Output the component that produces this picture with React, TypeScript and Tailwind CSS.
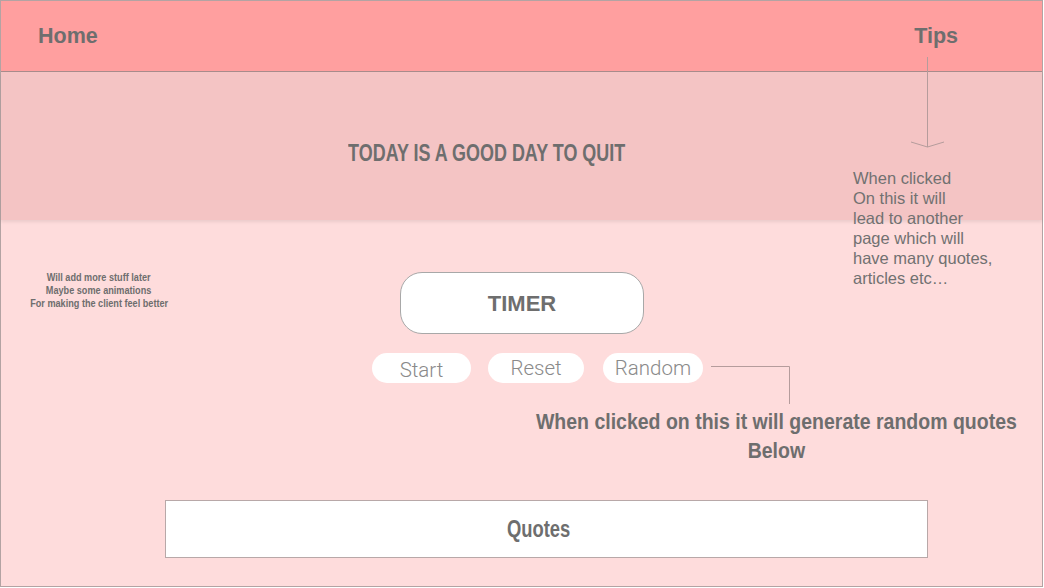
import React from "react";

// no condensed face is installed, so the bold headings are squeezed horizontally
const Squeeze = ({
	children,
	className = "",
}: {
	children: React.ReactNode;
	className?: string;
}) => (
	<span className={"inline-block whitespace-nowrap " + className}>{children}</span>
);

const Pill = ({
	label,
	width,
	offset = "",
}: {
	label: string;
	width: string;
	offset?: string;
}) => (
	<button
		className={
			"h-[30px] rounded-full bg-white text-[20.5px] font-light leading-none text-[#8a8a8a] font-['Roboto',sans-serif] " +
			width +
			" " +
			offset
		}>
		{label}
	</button>
);

const App: React.FC = () => {
	return (
		<div className="relative flex h-[588px] w-[1044px] flex-col overflow-hidden font-['Liberation_Sans',sans-serif] text-[#6e6e6e]">
			<div className="flex h-[587px] w-[1043px] flex-col border border-[#b3a3a3] bg-[#fedcdc]">
				{/* top bar */}
				<header className="flex h-[71px] shrink-0 items-center justify-between border-b border-[#a98c8c] bg-[#ff9f9f] pl-[37px] pr-[84px]">
					<span className="text-[21.5px] font-bold">Home</span>
					<span className="text-[21.5px] font-bold">Tips</span>
				</header>

				{/* banner */}
				<section className="flex h-[148px] shrink-0 items-center justify-center bg-[#f4c4c4] pr-[70px] shadow-[0_2px_3px_rgba(0,0,0,0.08)]">
					<h1 className="pt-[14px] text-[23px] font-bold">
						<Squeeze className="scale-x-[0.78]">TODAY IS A GOOD DAY TO QUIT</Squeeze>
					</h1>
				</section>

				{/* body */}
				<main className="relative flex flex-1 flex-col items-center">
					<div className="mt-[52px] flex h-[62px] w-[244px] items-center justify-center rounded-[22px] border border-[#a8a8a8] bg-white">
						<span className="pl-[1px] text-[22px] font-bold">TIMER</span>
					</div>

					<div className="ml-[371px] mt-[19px] flex self-start">
						<Pill label="Start" width="w-[99px]" offset="pt-[4px]" />
						<div className="ml-[17px]">
							<Pill label="Reset" width="w-[96px]" />
						</div>
						<div className="ml-[19px]">
							<Pill label="Random" width="w-[100px]" />
						</div>
					</div>

					<div className="ml-[515px] mt-[24px] flex w-[520px] flex-col items-center self-start text-[22px] font-bold leading-[29px]">
						<Squeeze className="scale-x-[0.886]">
							When clicked on this it will generate random quotes
						</Squeeze>
						<Squeeze className="scale-x-[0.886]">Below</Squeeze>
					</div>

					<div className="ml-[164px] mt-[35px] flex h-[58px] w-[763px] items-center justify-center self-start border border-[#b8a8a8] bg-white pr-[16px]">
						<span className="text-[23px] font-bold">
							<Squeeze className="scale-x-[0.8]">Quotes</Squeeze>
						</span>
					</div>

					{/* left note */}
					<div className="absolute left-[19px] top-[51px] flex w-[158px] flex-col items-center text-[11px] font-bold leading-[13px]">
						<Squeeze className="scale-x-[0.83]">Will add more stuff later</Squeeze>
						<Squeeze className="scale-x-[0.83]">Maybe some animations</Squeeze>
						<Squeeze className="scale-x-[0.83]">For making the client feel better</Squeeze>
					</div>

					{/* connector from Random */}
					<svg
						className="absolute left-[708px] top-[144px]"
						width="84"
						height="42"
						viewBox="0 0 84 42">
						<path d="M2 2.5 H80.5 V40" fill="none" stroke="#b59c9c" strokeWidth="1" />
					</svg>
				</main>
			</div>

			{/* Tips annotation arrow */}
			<svg
				className="absolute left-[908px] top-[56px]"
				width="38"
				height="94"
				viewBox="0 0 38 94">
				<path d="M19.5 1 V91" fill="none" stroke="#b59c9c" strokeWidth="1" />
				<path d="M3 86 L19.5 91 L36 86" fill="none" stroke="#b59c9c" strokeWidth="1" />
			</svg>

			<p className="absolute left-[853px] top-[168px] text-[16.5px] leading-[20px] text-[#717171]">
				When clicked
				<br />
				On this it will
				<br />
				lead to another
				<br />
				page which will
				<br />
				have many quotes,
				<br />
				articles etc…
			</p>
		</div>
	);
};

export default App;
